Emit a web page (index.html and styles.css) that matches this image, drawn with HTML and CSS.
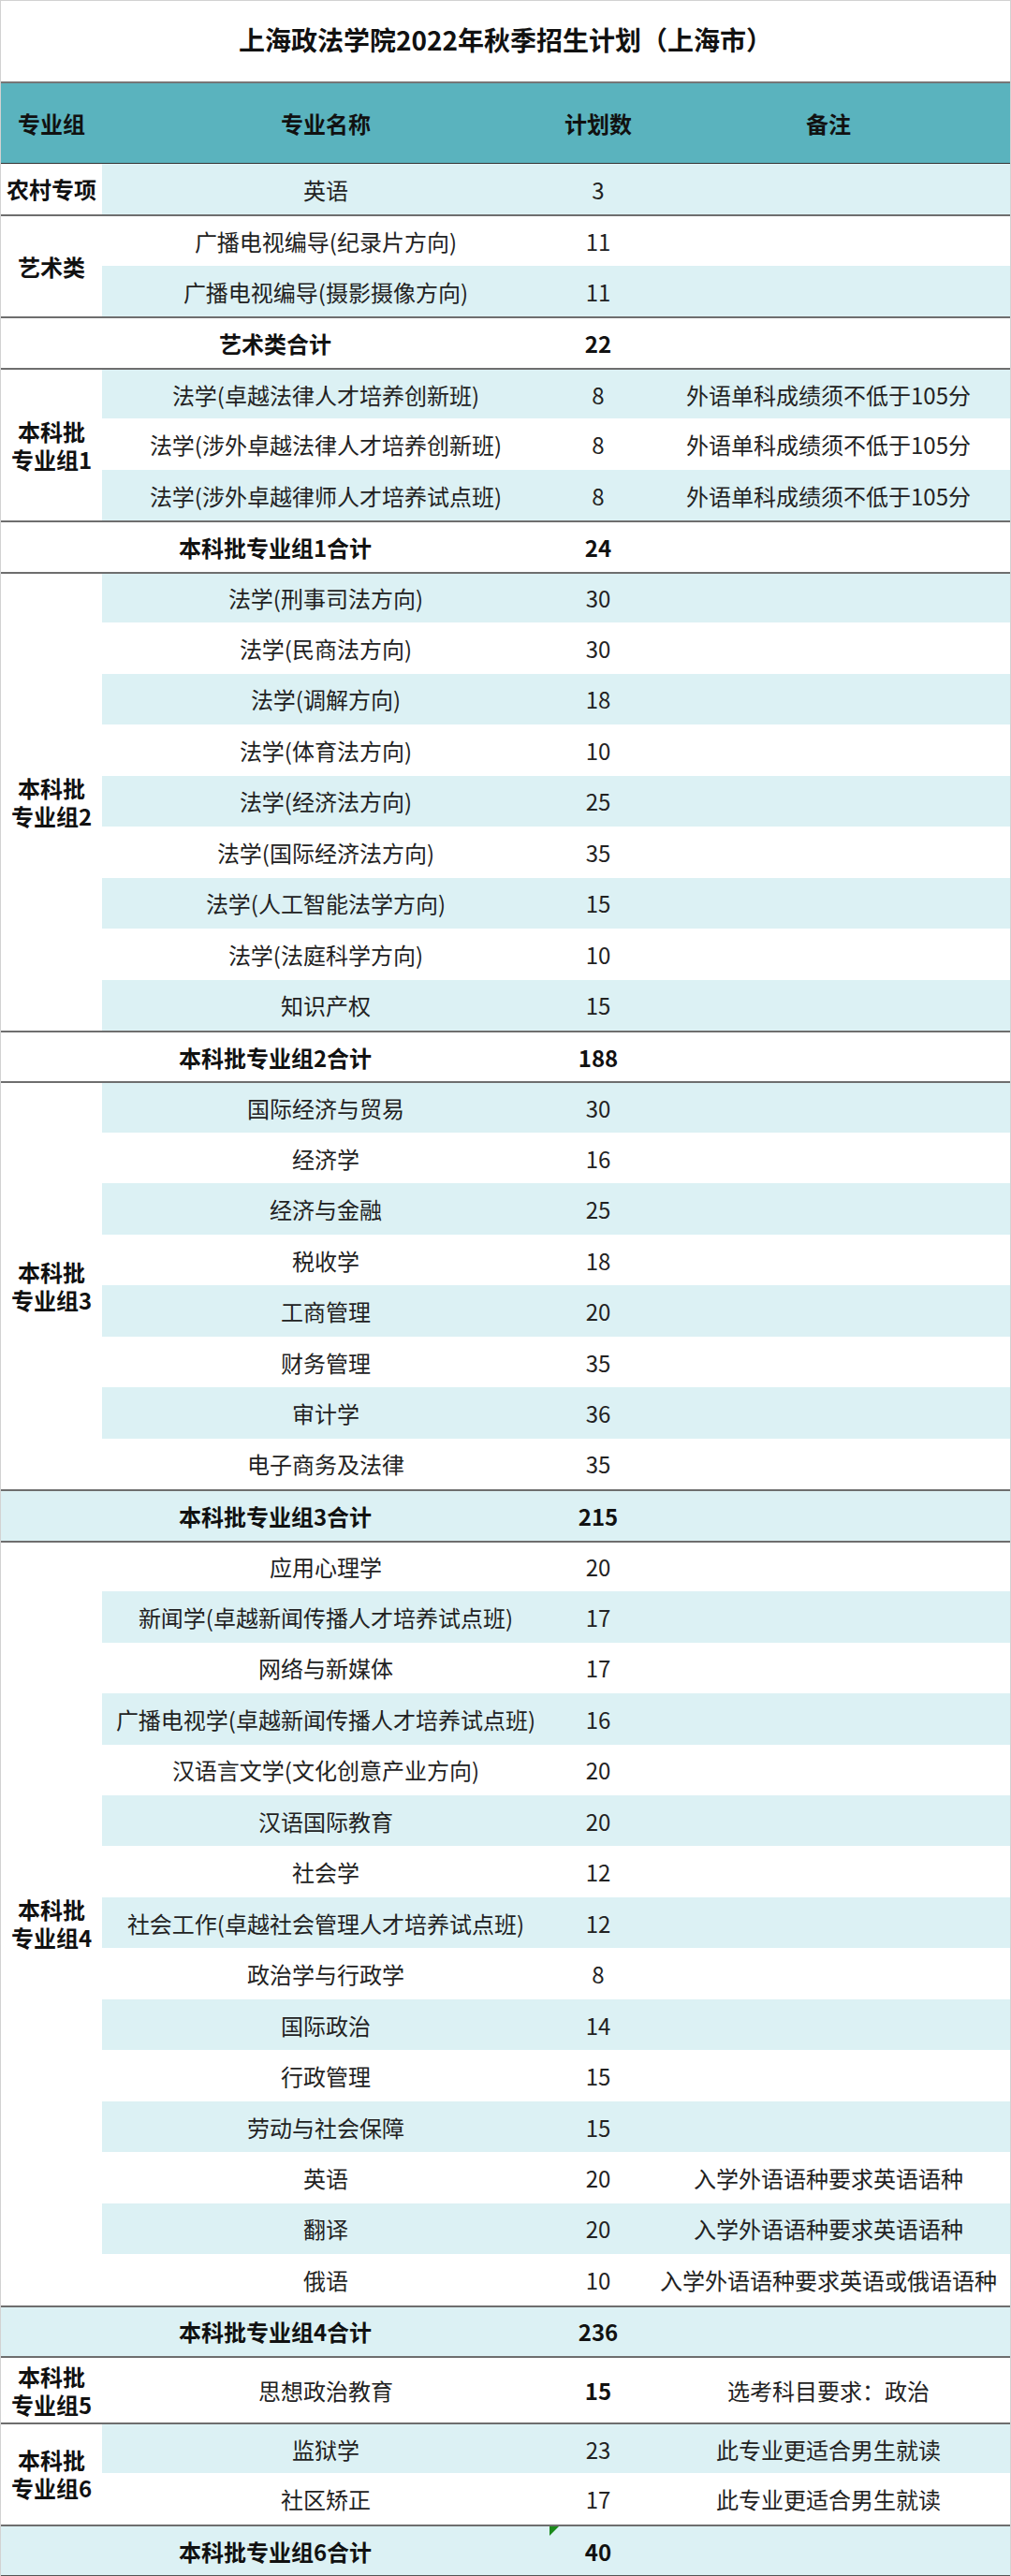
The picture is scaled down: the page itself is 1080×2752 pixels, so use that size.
FILE: index.html
```html
<!DOCTYPE html>
<html lang="zh-CN">
<head>
<meta charset="utf-8">
<title>上海政法学院2022年秋季招生计划（上海市）</title>
<link rel="stylesheet" href="styles.css">
</head>
<body>
<div class="sheet">
  <div class="title">上海政法学院2022年秋季招生计划（上海市）</div>
  <div class="grid">
    <div class="c h">专业组</div><div class="c h">专业名称</div><div class="c h">计划数</div><div class="c h">备注</div>

    <div class="c g">农村专项</div><div class="c b">英语</div><div class="c b">3</div><div class="c b"></div>

    <div class="c g s2 t">艺术类</div><div class="c t">广播电视编导(纪录片方向)</div><div class="c t">11</div><div class="c t"></div>
    <div class="c b">广播电视编导(摄影摄像方向)</div><div class="c b">11</div><div class="c b"></div>
    <div class="c sum t">艺术类合计</div><div class="c k t">22</div><div class="c t"></div>

    <div class="c g s3 t">本科批<br>专业组1</div><div class="c b t">法学(卓越法律人才培养创新班)</div><div class="c b t">8</div><div class="c b t">外语单科成绩须不低于105分</div>
    <div class="c">法学(涉外卓越法律人才培养创新班)</div><div class="c">8</div><div class="c">外语单科成绩须不低于105分</div>
    <div class="c b">法学(涉外卓越律师人才培养试点班)</div><div class="c b">8</div><div class="c b">外语单科成绩须不低于105分</div>
    <div class="c sum t">本科批专业组1合计</div><div class="c k t">24</div><div class="c t"></div>

    <div class="c g s9 t">本科批<br>专业组2</div><div class="c b t">法学(刑事司法方向)</div><div class="c b t">30</div><div class="c b t"></div>
    <div class="c">法学(民商法方向)</div><div class="c">30</div><div class="c"></div>
    <div class="c b">法学(调解方向)</div><div class="c b">18</div><div class="c b"></div>
    <div class="c">法学(体育法方向)</div><div class="c">10</div><div class="c"></div>
    <div class="c b">法学(经济法方向)</div><div class="c b">25</div><div class="c b"></div>
    <div class="c">法学(国际经济法方向)</div><div class="c">35</div><div class="c"></div>
    <div class="c b">法学(人工智能法学方向)</div><div class="c b">15</div><div class="c b"></div>
    <div class="c">法学(法庭科学方向)</div><div class="c">10</div><div class="c"></div>
    <div class="c b">知识产权</div><div class="c b">15</div><div class="c b"></div>
    <div class="c sum t">本科批专业组2合计</div><div class="c k t">188</div><div class="c t"></div>

    <div class="c g s8 t">本科批<br>专业组3</div><div class="c b t">国际经济与贸易</div><div class="c b t">30</div><div class="c b t"></div>
    <div class="c">经济学</div><div class="c">16</div><div class="c"></div>
    <div class="c b">经济与金融</div><div class="c b">25</div><div class="c b"></div>
    <div class="c">税收学</div><div class="c">18</div><div class="c"></div>
    <div class="c b">工商管理</div><div class="c b">20</div><div class="c b"></div>
    <div class="c">财务管理</div><div class="c">35</div><div class="c"></div>
    <div class="c b">审计学</div><div class="c b">36</div><div class="c b"></div>
    <div class="c">电子商务及法律</div><div class="c">35</div><div class="c"></div>
    <div class="c sum b t">本科批专业组3合计</div><div class="c k b t">215</div><div class="c b t"></div>

    <div class="c g s15 t">本科批<br>专业组4</div><div class="c t">应用心理学</div><div class="c t">20</div><div class="c t"></div>
    <div class="c b">新闻学(卓越新闻传播人才培养试点班)</div><div class="c b">17</div><div class="c b"></div>
    <div class="c">网络与新媒体</div><div class="c">17</div><div class="c"></div>
    <div class="c b">广播电视学(卓越新闻传播人才培养试点班)</div><div class="c b">16</div><div class="c b"></div>
    <div class="c">汉语言文学(文化创意产业方向)</div><div class="c">20</div><div class="c"></div>
    <div class="c b">汉语国际教育</div><div class="c b">20</div><div class="c b"></div>
    <div class="c">社会学</div><div class="c">12</div><div class="c"></div>
    <div class="c b">社会工作(卓越社会管理人才培养试点班)</div><div class="c b">12</div><div class="c b"></div>
    <div class="c">政治学与行政学</div><div class="c">8</div><div class="c"></div>
    <div class="c b">国际政治</div><div class="c b">14</div><div class="c b"></div>
    <div class="c">行政管理</div><div class="c">15</div><div class="c"></div>
    <div class="c b">劳动与社会保障</div><div class="c b">15</div><div class="c b"></div>
    <div class="c">英语</div><div class="c">20</div><div class="c">入学外语语种要求英语语种</div>
    <div class="c b">翻译</div><div class="c b">20</div><div class="c b">入学外语语种要求英语语种</div>
    <div class="c">俄语</div><div class="c">10</div><div class="c">入学外语语种要求英语或俄语语种</div>
    <div class="c sum b t">本科批专业组4合计</div><div class="c k b t">236</div><div class="c b t"></div>

    <div class="c g t">本科批<br>专业组5</div><div class="c t">思想政治教育</div><div class="c k t">15</div><div class="c t">选考科目要求：政治</div>

    <div class="c g s2 t">本科批<br>专业组6</div><div class="c b t">监狱学</div><div class="c b t">23</div><div class="c b t">此专业更适合男生就读</div>
    <div class="c">社区矫正</div><div class="c">17</div><div class="c">此专业更适合男生就读</div>
    <div class="c sum b t">本科批专业组6合计</div><div class="c k b t tri">40</div><div class="c b t"></div>
  </div>
</div>
</body>
</html>
```

FILE: styles.css
```css
html, body {
  margin: 0;
  padding: 0;
  background: #ffffff;
}

body {
  font-family: "Noto Sans CJK SC", "Noto Sans", sans-serif;
  color: #222222;
}

.sheet {
  width: 1080px;
  box-sizing: border-box;
  border-left: 1px solid #d2d2d2;
  border-right: 1px solid #d2d2d2;
}

.title {
  height: 89px;
  box-sizing: border-box;
  border-top: 1px solid #d2d2d2;
  border-bottom: 2px solid #767676;
  padding-bottom: 4px;
  display: flex;
  align-items: center;
  justify-content: center;
  font-size: 28px;
  font-weight: bold;
  color: #111111;
  white-space: nowrap;
}

.grid {
  display: grid;
  grid-template-columns: 108px 478px 104px 388px;
  grid-template-rows: 86px repeat(43, 54.47px) 70.7px repeat(3, 54.47px);
  border-bottom: 1px solid #555555;
}

.c {
  display: flex;
  align-items: center;
  justify-content: center;
  text-align: center;
  box-sizing: border-box;
  font-size: 24px;
  white-space: nowrap;
  position: relative;
  background: #ffffff;
}

.h {
  background: #5ab3be;
  font-weight: bold;
  color: #111111;
  border-bottom: 1px solid #333333;
}

.b {
  background: #dcf1f4;
}

.t {
  border-top: 2px solid #6e6e6e;
}

.k {
  font-weight: bold;
  color: #111111;
}

.g {
  font-weight: bold;
  color: #111111;
  line-height: 30px;
  background: #ffffff;
}

.sum {
  grid-column: span 2;
  font-weight: bold;
  color: #111111;
}

.s2 { grid-row: span 2; }
.s3 { grid-row: span 3; }
.s8 { grid-row: span 8; }
.s9 { grid-row: span 9; }
.s15 { grid-row: span 15; }

.tri::before {
  content: "";
  position: absolute;
  left: 0;
  top: 0;
  width: 0;
  height: 0;
  border-top: 10px solid #1b8a1b;
  border-right: 10px solid transparent;
}
```
